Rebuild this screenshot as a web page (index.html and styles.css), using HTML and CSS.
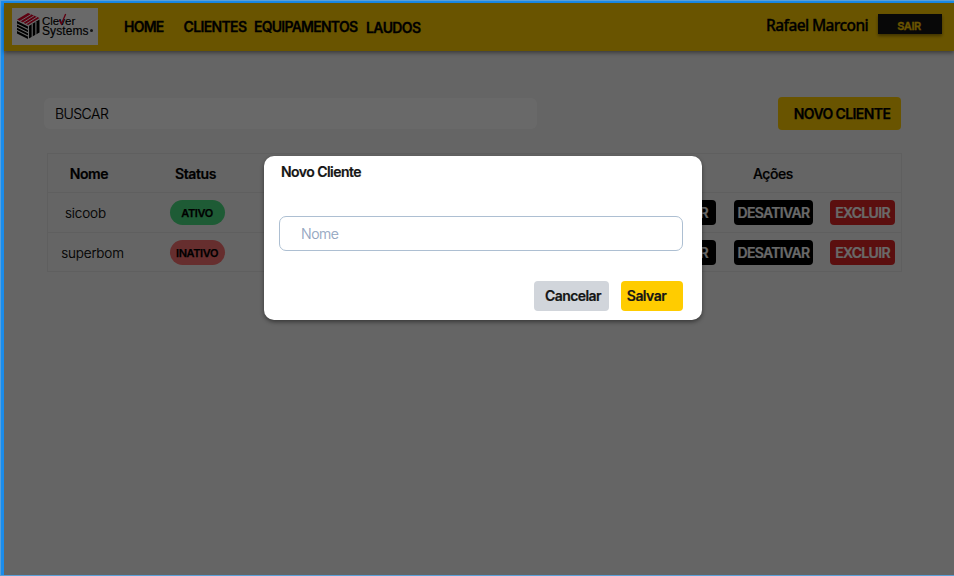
FILE: index.html
```html
<!DOCTYPE html>
<html lang="pt-BR">
<head>
<meta charset="utf-8">
<title>Clientes</title>
<link rel="stylesheet" href="styles.css">
</head>
<body>
<div class="frame">
  <div class="page">
    <header class="topbar">
      <div class="logo">
        <svg class="logo-mark" viewBox="0 0 23 27" aria-hidden="true">
          <path fill="#e4002b" d="M0 6.500 11 0l11.500 5L11 12z"/>
          <path stroke="#fff" stroke-width="1" fill="none" d="M2.500 8.500 14 1.500M5.500 10 17 2.800M8.500 11.300 20 4"/>
          <path fill="#000" d="M0 8l11 5.500V26L0 20.500zM11 13.500 22.500 6.500V19.500L11 26z"/>
          <path stroke="#fff" stroke-width="1.100" fill="none" d="M0 11 11 16.500M0 14.200 11 19.700M0 17.400 11 22.900M11.500 12.500v14M15.200 11v14M18.900 9v14"/>
        </svg>
        <div class="logo-text"><span class="word-top">Clever</span><span class="word-bottom">Systems<i></i></span></div>
        <svg class="logo-check" viewBox="0 0 10 14" aria-hidden="true"><path d="M1.500 7.500 3.800 12 8.500 1" fill="none" stroke="#e4002b" stroke-width="1.500"/></svg>
      </div>
      <nav class="nav">
        <a class="home">HOME</a><a class="clients">CLIENTES</a><a class="equip">EQUIPAMENTOS</a><a class="reports">LAUDOS</a>
      </nav>
      <span class="user">Rafael Marconi</span>
      <button class="logout">SAIR</button>
    </header>
    <main>
      <div class="toolbar">
        <div class="search">BUSCAR</div>
        <button class="new-client">NOVO CLIENTE</button>
      </div>
      <div class="table">
        <div class="row head"><span class="name">Nome</span><span class="status">Status</span><span class="actions-title">Ações</span></div>
        <div class="row first">
          <span class="name">sicoob</span><span class="status"><b class="pill on">ATIVO</b></span>
          <span class="actions"><b class="act edit">EDITAR</b><b class="act off">DESATIVAR</b><b class="act del">EXCLUIR</b></span>
        </div>
        <div class="row">
          <span class="name">superbom</span><span class="status"><b class="pill inactive">INATIVO</b></span>
          <span class="actions"><b class="act edit">EDITAR</b><b class="act off">DESATIVAR</b><b class="act del">EXCLUIR</b></span>
        </div>
      </div>
    </main>
    <div class="overlay">
      <section class="modal">
        <h2>Novo Cliente</h2>
        <div class="field">Nome</div>
        <div class="modal-actions"><button class="cancel">Cancelar</button><button class="save">Salvar</button></div>
      </section>
    </div>
  </div>
</div>
</body>
</html>
```

FILE: styles.css
```css
* { box-sizing: border-box; }
body { margin: 0; font-family: Inter, "Liberation Sans", sans-serif; font-size: 14px; color: #000; }
button { border: 0; padding: 0; font: inherit; color: inherit; }
.frame { width: 954px; height: 576px; padding: 1px 0 1px 1px; background: #5ba0d8; overflow: hidden; }
.page { position: relative; height: 574px; border-left: 3px solid #1a8ceb; border-top: 2px solid #1a8ceb; background: #f4f4f4; }
.topbar { height: 48px; display: flex; background: #fc0; box-shadow: 0 2px 4px rgba(0,0,0,.4); }
.logo { position: relative; display: flex; width: 86px; height: 37px; margin: 5px 0 0 8px; padding: 6px 0 0 5px; background: #fff; flex: none; }
.logo-mark { width: 23px; height: 27px; margin-top: -1px; flex: none; }
.logo-text { display: flex; flex-direction: column; margin: 2px 0 0 2px; font: 12px/10px "Liberation Sans", sans-serif; white-space: nowrap; -webkit-text-stroke: .15px; }
.word-top { height: 10px; font-size: 11.500px; letter-spacing: 0; }
.word-bottom { display: flex; height: 10px; letter-spacing: .1px; }
.logo-text i { width: 3px; height: 3px; margin: 3px 0 0 1px; border-radius: 50%; background: #333; }
.logo-check { position: absolute; left: 46px; top: 5px; width: 9px; height: 13px; }
.nav { display: flex; margin-left: 26px; padding-top: 15px; line-height: 18px; font-weight: 600; -webkit-text-stroke: .3px; white-space: nowrap; }
.home { width: 59.500px; letter-spacing: -.75px; }
.clients { width: 70.500px; letter-spacing: -.65px; }
.equip { width: 112px; letter-spacing: -.75px; }
.reports { letter-spacing: -.6px; padding-top: 1px; }
.user { margin-left: auto; width: 112px; padding-top: 11px; font: 500 15.500px/22px "Noto Sans", sans-serif; letter-spacing: -.6px; -webkit-text-stroke: .35px; white-space: nowrap; }
.logout { width: 64px; height: 20px; margin: 11px 12px 0 0; padding: 3px 2px 0 0; background: #151515; color: #fc0; font-size: 11px; font-weight: 600; letter-spacing: -.45px; -webkit-text-stroke: .3px; box-shadow: 0 2px 3px rgba(0,0,0,.4); }
main { padding: 46px 52px 0 40px; }
.toolbar { display: flex; justify-content: space-between; height: 33px; }
.search { width: 493px; height: 31px; margin-top: 1px; padding-left: 11px; line-height: 31px; border-radius: 6px; background: #fff; font-weight: 300; letter-spacing: -.55px; -webkit-text-stroke: .15px; }
.new-client { width: 123px; height: 33px; margin-right: 1px; padding-left: 5px; border-radius: 4px; background: #fc0; font-weight: 600; letter-spacing: -.6px; -webkit-text-stroke: .25px; }
.table { width: 855px; margin: 23px 0 0 3px; border: 1px solid #e6e6e6; border-bottom: 0; }
.row { display: flex; height: 39px; align-items: center; border-bottom: 1px solid #e6e6e6; }
.head { font-weight: 600; letter-spacing: -.4px; -webkit-text-stroke: .2px; }
.first { height: 40px; }
.name { width: 82px; text-align: center; }
.row:not(.head) .name { width: 90px; margin-right: -8px; padding: 1px 1px 0 0; font-size: 13.500px; font-weight: 300; letter-spacing: -.15px; -webkit-text-stroke: .15px; }
.first.row:not(.head) .name { padding: 0 15px 0 0; }
.status { width: 131px; text-align: center; }
.row:not(.head) .status { width: 132px; }
.actions-title { margin-left: auto; margin-right: 108px; font-weight: 500; }
.actions { display: flex; margin-left: auto; margin-right: 6px; }
.pill { display: inline-block; width: 55px; height: 25px; margin-left: 2px; border-radius: 13px; line-height: 26px; font-size: 11px; font-weight: 600; letter-spacing: -.4px; -webkit-text-stroke: .25px; }
.on { background: #4ade80; }
.inactive { background: #f87171; }
.act { height: 25px; border-radius: 4px; line-height: 26px; text-align: center; color: #fff; font-weight: 600; letter-spacing: -.68px; -webkit-text-stroke: .2px; }
.edit { width: 62px; margin-right: 18px; background: #000; }
.off { width: 79px; margin-right: 17px; background: #000; }
.del { width: 65px; background: #dc2626; }
.overlay { position: absolute; inset: 0; background: rgba(0,0,0,.59); }
.modal { width: 437.500px; height: 164.500px; margin: 152.500px 0 0 260px; padding: 7px 18.500px 10px 15px; border-radius: 10px; background: #fff; box-shadow: 0 2px 4px rgba(0,0,0,.45); }
h2 { margin: 0 0 0 2px; color: #151515; font-size: 14px; line-height: 18px; font-weight: 600; letter-spacing: -.55px; -webkit-text-stroke: .2px; }
.field { height: 35px; margin-top: 35.500px; padding-left: 21px; border: 1px solid #adbfd2; border-radius: 7px; line-height: 33px; font-weight: 300; letter-spacing: -.45px; -webkit-text-stroke: .15px; color: #8fa3be; }
.modal-actions { display: flex; justify-content: flex-end; gap: 12px; margin-top: 29.500px; }
.modal-actions button { height: 30px; border-radius: 4px; font-weight: 600; letter-spacing: -.55px; -webkit-text-stroke: .2px; color: #151515; }
.cancel { width: 75px; padding-left: 3px; background: #d1d5db; }
.modal-actions .save { width: 62px; padding-right: 11px; background: #fc0; }
```
